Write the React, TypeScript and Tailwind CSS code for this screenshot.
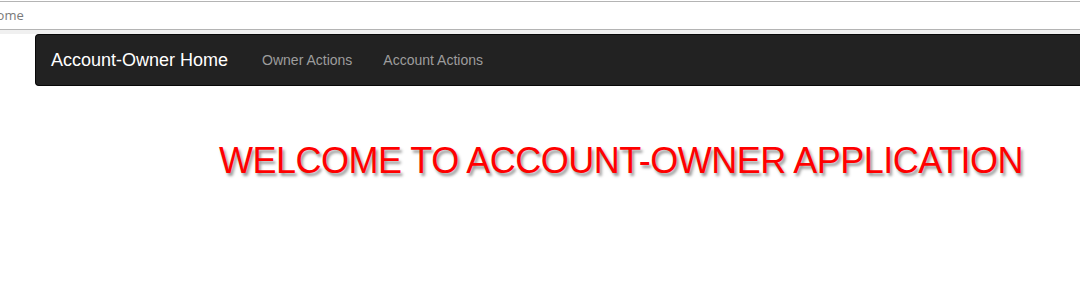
export default function App() {
  return (
    <div className="w-[1080px] h-[308px] bg-white overflow-hidden font-['Liberation_Sans',Arial,sans-serif]">
      <div className="h-[29px] mt-px border-y border-[#b4b4b4] flex items-center overflow-hidden">
        <span className="-ml-[13px] text-[13px] text-[#7a7a7a] font-['Open_Sans',sans-serif]">Home</span>
      </div>
      <div className="h-[4px] bg-[#f0f0f0]" />
      <nav className="ml-[35px] h-[52px] bg-[#222] border border-[#080808] border-r-0 rounded-l-[4px] flex items-center">
        <a className="pl-[15px] pr-[34px] text-[18px] text-white">Account-Owner Home</a>
        <a className="pr-[31px] text-[14px] text-[#9d9d9d]">Owner Actions</a>
        <a className="text-[14px] text-[#9d9d9d]">Account Actions</a>
      </nav>
      <h1 className="mt-[55px] ml-[219px] text-[36px] leading-[40px] tracking-[-0.5px] text-[#ff0000] [text-shadow:2px_3px_3px_#999] whitespace-nowrap">
        WELCOME TO ACCOUNT-OWNER APPLICATION
      </h1>
    </div>
  );
}
